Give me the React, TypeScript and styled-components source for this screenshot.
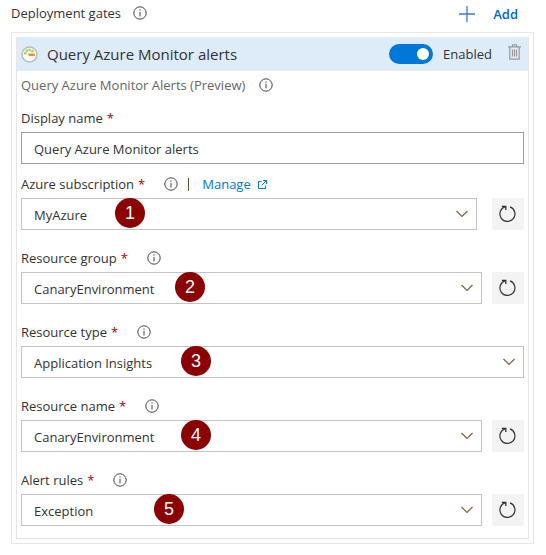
import React, { useId, useState } from "react";
import styled, { createGlobalStyle } from "styled-components";

const GlobalStyle = createGlobalStyle`
  *, *::before, *::after { box-sizing: border-box; }
  body {
    margin: 0;
    background: #fff;
    color: #333;
    font-family: "Open Sans", "Noto Sans", sans-serif;
    font-size: 13px;
    line-height: 20px;
  }
  button, input, select { font: inherit; color: inherit; }
  svg { display: block; flex: none; }
`;

const Page = styled.main`
  padding: 0 12px 0 11px;
`;

const TopBar = styled.header`
  display: flex;
  align-items: center;
  gap: 12px;
  height: 32px;
  padding: 0 15px 6px 0;
`;

const TopTitle = styled.h1`
  margin: 0;
  font-size: 13px;
  font-weight: 400;
`;

const AddButton = styled.button`
  display: flex;
  align-items: center;
  gap: 18px;
  margin-left: auto;
  padding: 2px 1px 0 0;
  border: 0;
  background: none;
  color: #0068c9;
  font-weight: 600;
  cursor: pointer;
`;

const Frame = styled.section`
  padding: 4px;
  border: 1px solid #e6e6e6;
`;

const Gate = styled.article`
  border: 1px solid #e6e6e6;
`;

const GateHeader = styled.div`
  display: flex;
  align-items: center;
  height: 34px;
  margin-top: -1px;
  padding: 0 7px 0 4px;
  background: #deebf8;
`;

const GateTitle = styled.h2`
  flex: 1;
  margin: 0 0 0 9px;
  font-size: 15px;
  font-weight: 400;
`;

const SwitchLabel = styled.label`
  display: flex;
  align-items: center;
  gap: 10px;
`;

const Switch = styled.input`
  appearance: none;
  display: flex;
  align-items: center;
  justify-content: flex-start;
  width: 44px;
  height: 20px;
  margin: 0;
  padding: 0 4px;
  border-radius: 10px;
  background: #999;
  cursor: pointer;

  &:checked {
    justify-content: flex-end;
    background: #0078d7;
  }

  &::after {
    content: "";
    width: 12px;
    height: 12px;
    border-radius: 50%;
    background: #fff;
  }
`;

const IconButton = styled.button`
  display: flex;
  margin-left: 16px;
  padding: 0 0 4px;
  border: 0;
  background: none;
  cursor: pointer;
`;

const GateBody = styled.div`
  padding: 4px 4px 12px;
`;

const Subtitle = styled.p`
  display: flex;
  align-items: center;
  gap: 14px;
  margin: 0 0 13px;
  color: #666;
`;

const Field = styled.div<{ $space?: number }>`
  margin-bottom: ${({ $space = 18 }) => $space}px;

  &:last-child { margin-bottom: 0; }
`;

const LabelRow = styled.div`
  display: flex;
  align-items: center;
  margin-bottom: 4px;
`;

const Required = styled.span`
  margin: 0 19px 0 4px;
  color: #a80000;
`;

const Divider = styled.span`
  width: 1px;
  height: 13px;
  margin: 0 13px 0 10px;
  background: #6b4a2a;
`;

const Link = styled.a`
  display: flex;
  align-items: center;
  gap: 7px;
  color: #0078d7;
  text-decoration: none;
`;

const ControlRow = styled.div<{ $gap: number }>`
  display: flex;
  gap: ${({ $gap }) => $gap}px;
`;

const TextInput = styled.input`
  display: block;
  width: 100%;
  height: 32px;
  padding: 2px 12px 0;
  border: 1px solid #a0a0a0;
  border-radius: 0;
  background: #fff;
`;

const SelectBox = styled.div`
  position: relative;
  flex: 1;
`;

const Select = styled.select`
  appearance: none;
  display: block;
  width: 100%;
  height: 32px;
  padding: 2px 30px 0 12px;
  border: 1px solid #c4c4c4;
  border-radius: 0;
  background: #fff;
`;

const Chevron = styled.svg`
  position: absolute;
  top: 12px;
  right: 8px;
  pointer-events: none;
`;

const Badge = styled.span<{ $left: number }>`
  position: absolute;
  top: 0;
  left: ${({ $left }) => $left}px;
  width: 30px;
  height: 30px;
  border-radius: 50%;
  background: #8b0000;
  color: #fff;
  font-family: "Liberation Sans", Arial, sans-serif;
  font-size: 18px;
  line-height: 30px;
  text-align: center;
  pointer-events: none;
`;

const RefreshButton = styled.button`
  display: flex;
  align-items: center;
  justify-content: center;
  width: 32px;
  height: 32px;
  padding: 0;
  border: 0;
  background: #f3f3f3;
  cursor: pointer;
`;

const InfoIcon = () => (
  <svg width="14" height="14" viewBox="0 0 14 14" role="img" aria-label="Information">
    <circle cx="7" cy="7" r="6.2" fill="none" stroke="#444" />
    <path d="M7 5.800v4.700M7 3.400v1.300" stroke="#444" />
  </svg>
);

const PlusIcon = () => (
  <svg width="16" height="16" viewBox="0 0 16 16" aria-hidden="true">
    <path d="M8 0v16M0 8h16" stroke="#3f78d6" strokeWidth="1.3" />
  </svg>
);

const GaugeIcon = () => (
  <svg width="17" height="17" viewBox="0 0 17 17" aria-hidden="true">
    <circle cx="8.5" cy="8.5" r="7.5" fill="#fafafa" stroke="#bcbcbc" strokeWidth="1.5" />
    <path d="M4 8.500A4.500 4.500 0 0 1 12.2 6" fill="none" stroke="#a6d65a" strokeWidth="2.600" strokeDasharray="2.4 .6" />
    <path d="M7 7.500h6.800v2.400H8z" fill="#f28c38" />
  </svg>
);

const TrashIcon = () => (
  <svg width="13" height="16" viewBox="0 0 13 16" aria-hidden="true">
    <path d="M0 2.8h13M4.5 2.8V.8h4v2M1.8 3v12.2h9.4V3M4.5 5.5v7M6.5 5.5v7M8.5 5.5v7" fill="none" stroke="#9c9c9c" strokeWidth="1.2" />
  </svg>
);

const ExternalIcon = () => (
  <svg width="9" height="9" viewBox="0 0 9 9" aria-hidden="true">
    <path d="M3.5 1.5h-3v7h7v-3M5 .5h3.5V4M8.5.5l-5 5" fill="none" stroke="#0078d7" />
  </svg>
);

const RefreshIcon = () => (
  <svg width="18" height="18" viewBox="0 0 18 18" aria-hidden="true">
    <path d="M11 1.900A7.500 7.500 0 1 1 6.500 1.700" fill="none" stroke="#333" strokeWidth="1.2" />
    <path d="M2.800 1.300H6.800V5" fill="none" stroke="#333" strokeWidth="1.3" />
  </svg>
);

interface SelectFieldProps {
  label: string;
  value: string;
  step: number;
  badgeLeft: number;
  gap?: number;
  refreshable?: boolean;
  manage?: boolean;
}

function SelectField({ label, value, step, badgeLeft, gap = 10, refreshable = true, manage }: SelectFieldProps) {
  const id = useId();
  return (
    <Field>
      <LabelRow>
        <label htmlFor={id}>{label}</label>
        <Required>*</Required>
        <InfoIcon />
        {manage && (
          <>
            <Divider />
            <Link href="#manage">
              Manage
              <ExternalIcon />
            </Link>
          </>
        )}
      </LabelRow>
      <ControlRow $gap={gap}>
        <SelectBox>
          <Select id={id} defaultValue={value}>
            <option>{value}</option>
          </Select>
          <Chevron width="14" height="8" viewBox="0 0 14 8" aria-hidden="true">
            <path d="M1.5 1l5.500 5.500L12.500 1" fill="none" stroke="#80603f" strokeWidth="1.2" />
          </Chevron>
          <Badge $left={badgeLeft}>{step}</Badge>
        </SelectBox>
        {refreshable && (
          <RefreshButton type="button" aria-label={`Refresh ${label}`}>
            <RefreshIcon />
          </RefreshButton>
        )}
      </ControlRow>
    </Field>
  );
}

export default function App() {
  const nameId = useId();
  const [enabled, setEnabled] = useState(true);

  return (
    <>
      <GlobalStyle />
      <Page>
        <TopBar>
          <TopTitle>Deployment gates</TopTitle>
          <InfoIcon />
          <AddButton type="button">
            <PlusIcon />
            Add
          </AddButton>
        </TopBar>
        <Frame>
          <Gate>
            <GateHeader>
              <GaugeIcon />
              <GateTitle>Query Azure Monitor alerts</GateTitle>
              <SwitchLabel>
                <Switch
                  type="checkbox"
                  role="switch"
                  checked={enabled}
                  onChange={(event) => setEnabled(event.target.checked)}
                />
                Enabled
              </SwitchLabel>
              <IconButton type="button" aria-label="Delete gate">
                <TrashIcon />
              </IconButton>
            </GateHeader>
            <GateBody>
              <Subtitle>
                Query Azure Monitor Alerts (Preview)
                <InfoIcon />
              </Subtitle>
              <Field $space={10}>
                <LabelRow>
                  <label htmlFor={nameId}>Display name</label>
                  <Required>*</Required>
                </LabelRow>
                <TextInput id={nameId} type="text" defaultValue="Query Azure Monitor alerts" />
              </Field>
              <SelectField label="Azure subscription" value="MyAzure" step={1} badgeLeft={94} gap={15} manage />
              <SelectField label="Resource group" value="CanaryEnvironment" step={2} badgeLeft={154} />
              <SelectField label="Resource type" value="Application Insights" step={3} badgeLeft={160} refreshable={false} />
              <SelectField label="Resource name" value="CanaryEnvironment" step={4} badgeLeft={160} />
              <SelectField label="Alert rules" value="Exception" step={5} badgeLeft={133} />
            </GateBody>
          </Gate>
        </Frame>
      </Page>
    </>
  );
}
